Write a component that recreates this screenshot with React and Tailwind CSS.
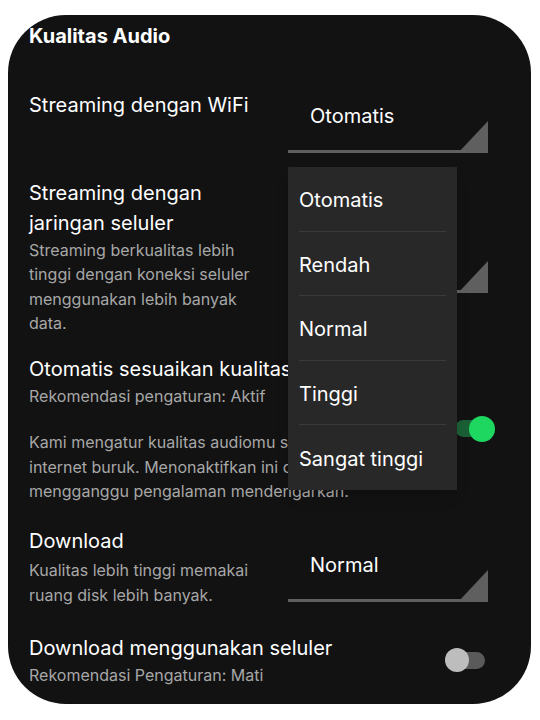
import React from "react";

const font = { fontFamily: "Inter, 'Noto Sans', sans-serif" };

const Dropdown = ({ value, className = "" }) => (
  <div className={`w-[200px] h-[63px] shrink-0 relative ${className}`}>
    <div className="pl-[22px] pt-[11px] text-[20px] leading-[30px] text-white">{value}</div>
    <svg className="absolute left-0 bottom-0" width="200" height="32" viewBox="0 0 200 32">
      <rect x="0" y="29" width="200" height="3" fill="#5f5f5f" />
      <polygon points="170,32 200,32 200,0" fill="#5f5f5f" />
    </svg>
  </div>
);

const Toggle = ({ on }) =>
  on ? (
    <div className="relative w-[40px] h-[26px] flex items-center">
      <div className="w-[30px] h-[17px] rounded-full bg-[#1a5f35]" />
      <div className="absolute right-0 w-[26px] h-[26px] rounded-full bg-[#1ed760]" />
    </div>
  ) : (
    <div className="relative w-[40px] h-[24px] flex items-center">
      <div className="ml-[2px] w-[38px] h-[17px] rounded-full bg-[#5a5a5a]" />
      <div className="absolute left-0 w-[24px] h-[24px] rounded-full bg-[#bdbdbd]" />
    </div>
  );

const Lines = ({ lines, className }) => (
  <div className={className}>
    {lines.map((l) => (
      <div key={l} className="whitespace-nowrap">{l}</div>
    ))}
  </div>
);

const title = "text-[20px] leading-[30px] text-white";
const desc = "text-[16px] leading-[24.3px] text-[#a7a7a7]";

const menuItems = ["Otomatis", "Rendah", "Normal", "Tinggi", "Sangat tinggi"];

export default function App() {
  return (
    <div className="w-[540px] h-[720px] bg-white pt-[15px] pl-[8px]" style={font}>
      <div className="relative w-[523px] h-[689px] bg-[#121212] rounded-[58px] overflow-hidden pl-[21px] pt-[9px]">
        <h2 className="text-[20px] leading-[24px] font-bold text-white">Kualitas Audio</h2>

        <div className="flex items-start mt-[42px]">
          <div className="w-[259px]">
            <div className={title}>Streaming dengan WiFi</div>
          </div>
          <Dropdown value="Otomatis" />
        </div>

        <div className="flex items-start mt-[25px]">
          <div className="w-[259px]">
            <Lines className={title} lines={["Streaming dengan", "jaringan seluler"]} />
            <Lines
              className={desc}
              lines={[
                "Streaming berkualitas lebih",
                "tinggi dengan koneksi seluler",
                "menggunakan lebih banyak",
                "data.",
              ]}
            />
          </div>
          <Dropdown value="" className="mt-[52px]" />
        </div>

        <div className="flex items-center mt-[19px]">
          <div className="w-[426px] overflow-hidden">
            <div className={`${title} whitespace-nowrap`}>Otomatis sesuaikan kualitas</div>
            <div className={desc}>Rekomendasi pengaturan: Aktif</div>
            <Lines
              className={`mt-[22px] ${desc}`}
              lines={[
                "Kami mengatur kualitas audiomu saat koneksi",
                "internet buruk. Menonaktifkan ini dapat",
                "mengganggu pengalaman mendengarkan.",
              ]}
            />
          </div>
          <Toggle on />
        </div>

        <div className="flex items-start mt-[23px]">
          <div className="w-[259px]">
            <div className={title}>Download</div>
            <Lines className={`mt-[2px] ${desc}`} lines={["Kualitas lebih tinggi memakai", "ruang disk lebih banyak."]} />
          </div>
          <Dropdown value="Normal" className="mt-[13px]" />
        </div>

        <div className="flex items-center mt-[26px]">
          <div className="w-[416px]">
            <div className={title}>Download menggunakan seluler</div>
            <div className={desc}>Rekomendasi Pengaturan: Mati</div>
          </div>
          <Toggle on={false} />
        </div>

        <div className="absolute left-[280px] top-[152px] w-[169px] bg-[#282828] shadow-lg">
          {menuItems.map((item, i) => (
            <div key={item} className="px-[11px]">
              <div
                className={`h-[64.5px] pt-[3px] flex items-center text-[20px] text-white ${
                  i < menuItems.length - 1 ? "border-b border-[#3a3a3a]" : ""
                }`}
              >
                {item}
              </div>
            </div>
          ))}
        </div>
      </div>
    </div>
  );
}
